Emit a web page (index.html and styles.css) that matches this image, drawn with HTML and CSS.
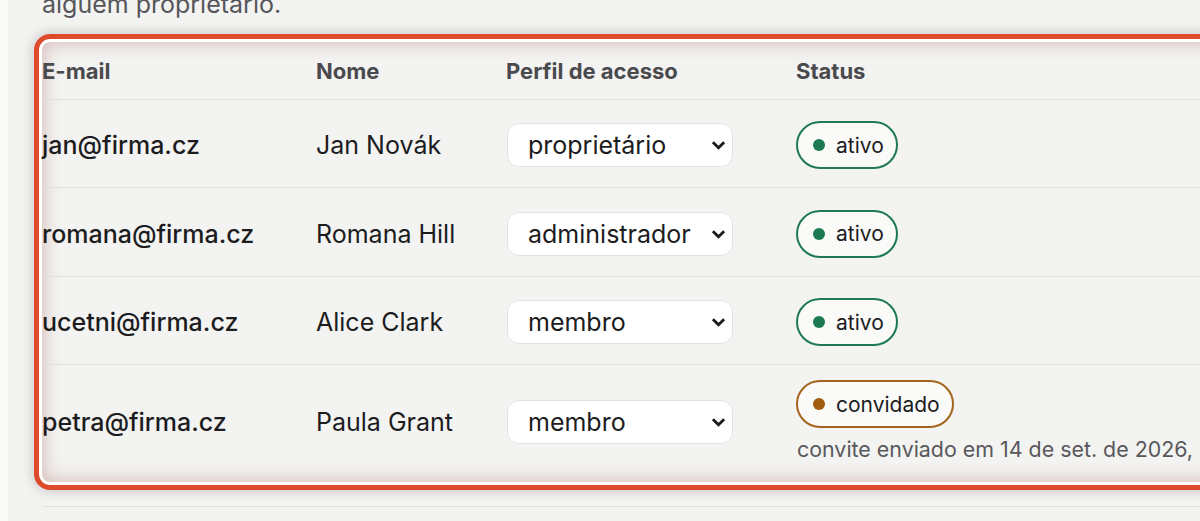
FILE: index.html
```html
<!DOCTYPE html>
<html lang="pt-BR">
<head>
    <meta charset="UTF-8">
    <meta name="viewport" content="width=device-width, initial-scale=1.0">
    <title>Membros da equipe</title>
    <link rel="stylesheet" href="styles.css">
</head>
<body>
    <div class="page">
        <p class="intro">alguém proprietário.</p>

        <div class="members highlight">
            <div class="row head">
                <div>E-mail</div>
                <div>Nome</div>
                <div>Perfil de acesso</div>
                <div>Status</div>
            </div>

            <div class="row">
                <div class="email">jan@firma.cz</div>
                <div>Jan Novák</div>
                <div class="select-wrap">
                    <select class="role">
                        <option selected>proprietário</option>
                        <option>administrador</option>
                        <option>membro</option>
                    </select>
                    <svg class="chevron" viewBox="0 0 16 10"><path d="M2 2l6 6 6-6"/></svg>
                </div>
                <div><span class="badge active"><i class="dot"></i>ativo</span></div>
            </div>

            <div class="row tall">
                <div class="email">romana@firma.cz</div>
                <div>Romana Hill</div>
                <div class="select-wrap">
                    <select class="role">
                        <option>proprietário</option>
                        <option selected>administrador</option>
                        <option>membro</option>
                    </select>
                    <svg class="chevron" viewBox="0 0 16 10"><path d="M2 2l6 6 6-6"/></svg>
                </div>
                <div><span class="badge active"><i class="dot"></i>ativo</span></div>
            </div>

            <div class="row">
                <div class="email">ucetni@firma.cz</div>
                <div>Alice Clark</div>
                <div class="select-wrap">
                    <select class="role">
                        <option>proprietário</option>
                        <option>administrador</option>
                        <option selected>membro</option>
                    </select>
                    <svg class="chevron" viewBox="0 0 16 10"><path d="M2 2l6 6 6-6"/></svg>
                </div>
                <div><span class="badge active"><i class="dot"></i>ativo</span></div>
            </div>

            <div class="row last">
                <div class="email">petra@firma.cz</div>
                <div>Paula Grant</div>
                <div class="select-wrap">
                    <select class="role">
                        <option>proprietário</option>
                        <option>administrador</option>
                        <option selected>membro</option>
                    </select>
                    <svg class="chevron" viewBox="0 0 16 10"><path d="M2 2l6 6 6-6"/></svg>
                </div>
                <div class="status">
                    <span class="badge invited"><i class="dot"></i>convidado</span>
                    <span class="note">convite enviado em 14 de set. de 2026,</span>
                </div>
            </div>
        </div>

        <div class="divider"></div>
    </div>
</body>
</html>
```

FILE: styles.css
```css
html, body {
    margin: 0;
    height: 100%;
    overflow: hidden;
}
body {
    font-family: Inter, "Noto Sans", Arial, sans-serif;
    background-color: #fafaf9;
    color: #1c1c1e;
}
.page {
    margin-left: 8px;
    min-height: 100%;
    background-color: #f3f3f1;
    padding-left: 26px;
    padding-top: 1px;
}
.intro {
    margin: -12px 0 0 8px;
    font-size: 25px;
    line-height: 30px;
    color: #56565a;
}
.highlight {
    margin-top: 15px;
    width: 1300px;
    border: 5px solid #dd4a2c;
    border-radius: 16px;
    padding: 3px;
    box-shadow: 0 0 12px 2px rgba(0,0,0,0.16),
                inset 0 0 0 3px #fff,
                inset 0 0 16px 6px rgba(150,70,60,0.28);
}
.row {
    box-sizing: border-box;
    display: grid;
    grid-template-columns: 274px 190px 290px 1fr;
    align-items: center;
    height: 88px;
    padding-top: 3px;
    border-bottom: 1px solid #e1e1de;
    font-size: 25px;
}
.row.tall {
    height: 89px;
}
.row.head {
    height: 58px;
    padding-top: 0;
    font-size: 22px;
    font-weight: 700;
    color: #4a4a4e;
}
.row.last {
    height: auto;
    padding: 15px 0 18px;
    border-bottom: none;
}
.email {
    font-weight: 500;
}
.select-wrap {
    display: grid;
    justify-self: start;
    align-items: center;
    justify-items: end;
}
.select-wrap > * {
    grid-area: 1 / 1;
}
.role {
    appearance: none;
    justify-self: start;
    width: 226px;
    height: 44px;
    margin-left: 1px;
    padding: 0 40px 0 20px;
    font-family: inherit;
    font-size: 25px;
    color: #1c1c1e;
    background-color: #fff;
    border: 1px solid #e3e3e0;
    border-radius: 12px;
}
.chevron {
    width: 15px;
    height: 10px;
    margin-right: 7px;
    pointer-events: none;
    fill: none;
    stroke: #1c1c1e;
    stroke-width: 3;
}
.badge {
    box-sizing: border-box;
    display: inline-flex;
    align-items: center;
    height: 48px;
    padding: 0 12px 0 15px;
    border: 2px solid;
    border-radius: 24px;
    background-color: #fafaf8;
    font-size: 21px;
    color: #1c1c1e;
}
.dot {
    width: 12px;
    height: 12px;
    border-radius: 50%;
    margin-right: 11px;
}
.active {
    border-color: #1f7a53;
}
.active .dot {
    background-color: #1b7a52;
}
.invited {
    border-color: #a5641c;
}
.invited .dot {
    background-color: #a15c10;
}
.status {
    display: flex;
    flex-direction: column;
    align-items: flex-start;
    gap: 6px;
}
.note {
    white-space: nowrap;
    font-size: 21.4px;
    line-height: 30px;
    color: #58585c;
    margin-left: 1px;
}
.divider {
    margin: 16px 0 0 8px;
    border-top: 1px solid #e1e1de;
}
```
